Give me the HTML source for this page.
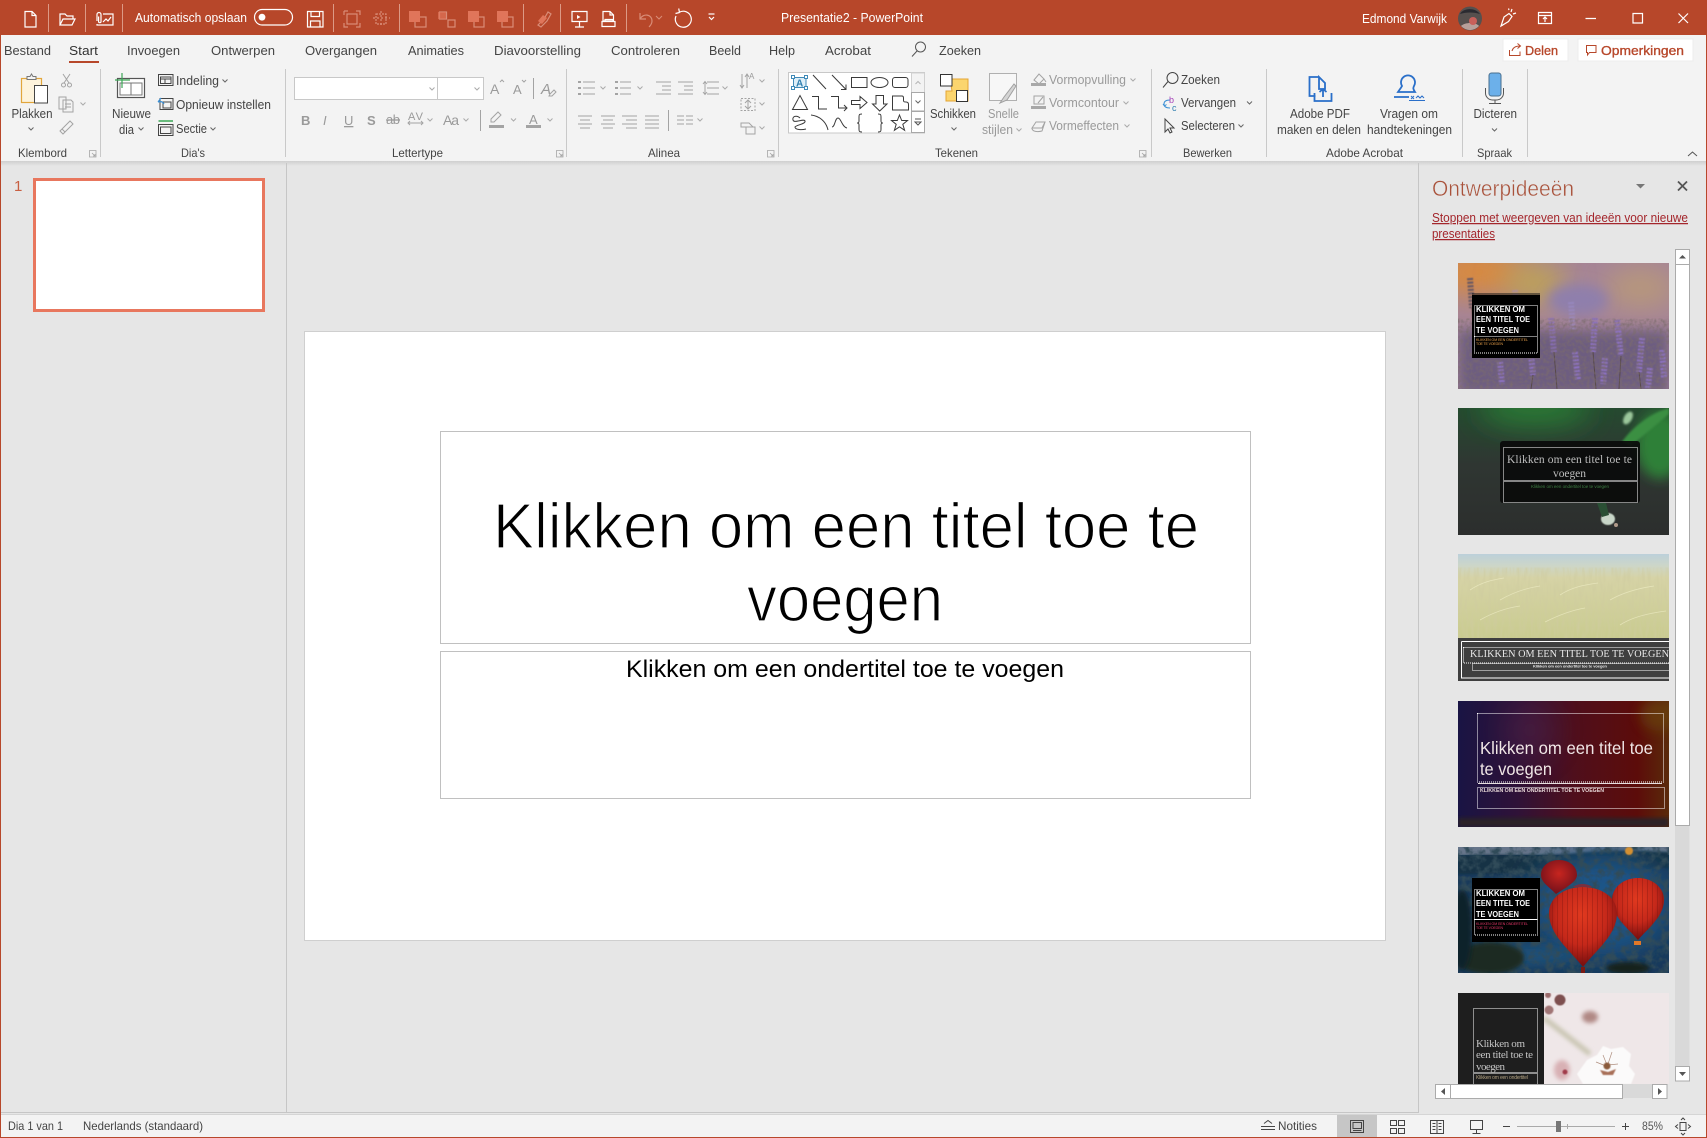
<!DOCTYPE html>
<html lang="nl"><head><meta charset="utf-8"><title>Presentatie2 - PowerPoint</title>
<style>
html,body{margin:0;padding:0;background:#e6e6e6;overflow:hidden}
svg{display:block}
text{font-family:"Liberation Sans",sans-serif;font-size:12.5px;fill:#444}
.w text,text.w{fill:#fff}
.d text,text.d{fill:#9a9a9a}
.ic{fill:none;stroke:#555;stroke-width:1}
.wi{fill:none;stroke:#fff;stroke-width:1.2}
.di{fill:none;stroke:#d98d78;stroke-width:1.2}
.gi{fill:none;stroke:#a3a3a3;stroke-width:1}
.si{fill:none;stroke:#444;stroke-width:1}
.sep{stroke:#c9c9c9;stroke-width:1}
.dot{fill:none;stroke:#fff;stroke-width:1;stroke-dasharray:1 1}
</style></head><body>
<svg xmlns="http://www.w3.org/2000/svg" width="1707" height="1138" viewBox="0 0 1707 1138">
<defs>
<path id="c" d="M-2.5-1.500L0 1L2.500-1.500" fill="none" stroke="#666" stroke-width="1"/>
<path id="cd" d="M-2.500-1.500L0 1L2.500-1.500" fill="none" stroke="#aaa" stroke-width="1"/>
<path id="lc" d="M.5.5h6.500v6.500h-6.500zM3 3l3 3M6 4v2h-2" fill="none" stroke="#a5a5a5" stroke-width=".8"/>
<filter id="b05" x="-30%" y="-30%" width="160%" height="160%"><feGaussianBlur stdDeviation=".5"/></filter>
<filter id="b2" x="-30%" y="-30%" width="160%" height="160%"><feGaussianBlur stdDeviation="2"/></filter>
<filter id="b1" x="-30%" y="-30%" width="160%" height="160%"><feGaussianBlur stdDeviation="1"/></filter>
<filter id="b6" x="-50%" y="-50%" width="200%" height="200%"><feGaussianBlur stdDeviation="6"/></filter>
<filter id="b14" x="-80%" y="-80%" width="260%" height="260%"><feGaussianBlur stdDeviation="14"/></filter>
<filter id="n"><feTurbulence type="fractalNoise" baseFrequency=".3" numOctaves="2" seed="4"/><feColorMatrix values="0 0 0 0 .2 0 0 0 0 .15 0 0 0 0 .15 0 0 0 1.6 -.6"/></filter>
<filter id="ng"><feTurbulence type="fractalNoise" baseFrequency=".35 .06" numOctaves="2" seed="7"/><feColorMatrix values="0 0 0 0 .62 0 0 0 0 .6 0 0 0 0 .35 0 0 0 1.4 -.55"/></filter>
<filter id="nk"><feTurbulence type="fractalNoise" baseFrequency=".13" numOctaves="3" seed="3"/><feColorMatrix values="0 0 0 0 .03 0 0 0 0 .07 0 0 0 0 .1 0 0 0 3 -1.2"/></filter>
<clipPath id="c1"><rect x="1458" y="263" width="211" height="126"/></clipPath>
<clipPath id="c2"><rect x="1458" y="408" width="211" height="127"/></clipPath>
<clipPath id="c3"><rect x="1458" y="554" width="211" height="127"/></clipPath>
<clipPath id="c4"><rect x="1458" y="701" width="211" height="126"/></clipPath>
<clipPath id="c5"><rect x="1458" y="847" width="211" height="126"/></clipPath>
<clipPath id="c6"><rect x="1458" y="993" width="211" height="91"/></clipPath>
<linearGradient id="sh" x1="0" y1="0" x2="0" y2="1"><stop offset="0" stop-color="#cfcfcf"/><stop offset="1" stop-color="#e6e6e6"/></linearGradient>
<linearGradient id="g2" x1="0" y1="0" x2="0" y2="1"><stop offset="0" stop-color="#254a30"/><stop offset=".45" stop-color="#2f3632"/><stop offset="1" stop-color="#2c2e2d"/></linearGradient>
<linearGradient id="g3" x1="0" y1="0" x2="0" y2="1"><stop offset="0" stop-color="#bcd0da"/><stop offset=".14" stop-color="#cdd6c8"/><stop offset=".28" stop-color="#d6d3a6"/><stop offset="1" stop-color="#c9cb8f"/></linearGradient>
<linearGradient id="g4" x1="0" y1="0" x2="1" y2="0"><stop offset="0" stop-color="#191444"/><stop offset=".28" stop-color="#2f1238"/><stop offset=".55" stop-color="#4f0f1c"/><stop offset=".85" stop-color="#5c0c0a"/><stop offset="1" stop-color="#5a2a0a"/></linearGradient>
<radialGradient id="bal" cx=".48" cy=".35" r=".62"><stop offset="0" stop-color="#e0391f"/><stop offset=".6" stop-color="#c5281a"/><stop offset="1" stop-color="#7c1010"/></radialGradient>
<radialGradient id="bal2" cx=".5" cy=".4" r=".62"><stop offset="0" stop-color="#c7251f"/><stop offset="1" stop-color="#70101a"/></radialGradient>
<pattern id="st" width="5" height="10" patternUnits="userSpaceOnUse"><path d="M2.500 0v10" stroke="#7a120c" stroke-width=".7" opacity=".5"/></pattern>
</defs>

<!-- base -->
<rect width="1707" height="1138" fill="#e6e6e6"/>
<rect width="1707" height="35" fill="#b7472a"/>
<rect y="35" width="1707" height="126" fill="#f3f3f3"/>
<rect y="161" width="1707" height="5" fill="url(#sh)"/>

<!-- title bar icons -->
<g class="wi">
<path d="M25 11.500h7l4 4v11.500H25zM32 11.500v4h4"/>
<path d="M60 25V14h5l2 2h6v3M60 25l3-6h12l-3 6z"/>
<path d="M97 21v-6.500a2 2 0 0 1 4 0v7a1.200 1.200 0 0 1-2.400 0v-5M103 14h10v11H97v-1M103 22l3-3 2 2 3-4"/>
<rect x="254.500" y="9.500" width="38" height="15.500" rx="7.700"/>
<path d="M307.500 11.500h15.500v15.500h-15.500zM311 11.500v5h8.500v-5M310.500 27v-6h9.500v6"/>
<path d="M572 11.500h15v10h-15zM579.500 21.500v5M575 27h9"/>
<path d="M577 15v4l3.500-2z" fill="#fff" stroke="none"/>
<path d="M603 11.500h7l3.500 3.500v6h-10.500zM610 11.500v3.500h3.500M602 21.500h13v5h-13zM605 21.500v-2h8v2"/>
<path d="M676 16a8 8 0 1 0 3-3.500M679.500 12.500l-.8-4M679.500 12.500l-4 1"/>
<path d="M708.500 14h6"/>
<path d="M709 17l2.500 2.500l2.500-2.500"/>
<path d="M1501 26l3-9 5-3.500 3 3-3.500 5zM1511 12l1-3M1513 14l3-1M1509 10l-.5-1.500M1501 26l2-1"/>
<path d="M1538.500 12.500h13v11h-13zM1538.500 15.500h13M1545 22v-5M1543 19l2-2 2 2"/>
<path d="M1585.500 18.500h10.500M1633 13.500h9.500v9.500h-9.500zM1678.500 13.500l9.500 9.500M1688 13.500l-9.500 9.500"/>
</g>
<circle cx="262" cy="17.200" r="3.400" fill="#fff"/>
<g stroke="#dc9a86" stroke-width="1"><path d="M48.500 4v28M85.500 4v28M122.500 4v28M333.500 4v28M399.500 4v28M523.500 4v28M560.500 4v28M626.500 4v28"/></g>
<g class="di">
<rect x="347" y="14" width="10" height="10"/><path d="M344 11h4M344 11v4M356 11h4v4M344 23v4h4M360 23v4h-4"/>
<rect x="376" y="14" width="10" height="10" stroke-dasharray="2 1"/><path d="M373 18h17M381 11v16" stroke-dasharray="2 2"/>
<rect x="415" y="17" width="11" height="10"/><rect x="439.500" y="12" width="7" height="7"/><rect x="448" y="20" width="7" height="7"/>
<rect x="474" y="17" width="10" height="10"/><rect x="502" y="17" width="11" height="10"/>
<path d="M538 25l6-6 4-7 3 2-4 7-6 6z"/>
<path d="M640 13v6h6M640 19c3-6 12-5 12 2 0 2-1 4-3 6"/>
<path d="M656 16l3 3 3-3" stroke-width="1"/>
</g>
<g fill="#e0755a"><rect x="409" y="11" width="11" height="11"/><rect x="468" y="11" width="11" height="11"/><rect x="497" y="11" width="11" height="11"/><rect x="438" y="12" width="8" height="7" opacity=".7"/><path d="M538 21l5-6 4 3-5 6z"/></g>
<g class="w"><text x="135" y="22" textLength="112" lengthAdjust="spacingAndGlyphs">Automatisch opslaan</text>
<text x="781" y="22" textLength="142" lengthAdjust="spacingAndGlyphs">Presentatie2  -  PowerPoint</text>
<text x="1362" y="23" textLength="85" lengthAdjust="spacingAndGlyphs">Edmond Varwijk</text></g>
<circle cx="1470" cy="18.500" r="12" fill="#56504e"/><path d="M1461 26a12 12 0 0 0 18 0c-3-4-14-4-18 0z" fill="#b8a09a"/><circle cx="1473" cy="21" r="4" fill="#c8605a"/><path d="M1460 14c3-6 15-7 20 0-6-2-14-2-20 0z" fill="#2a2a30"/>

<!-- tabs -->
<text x="4" y="55" textLength="47" lengthAdjust="spacingAndGlyphs">Bestand</text>
<text x="69" y="55" textLength="29" lengthAdjust="spacingAndGlyphs" style="fill:#333">Start</text>
<rect x="69" y="61" width="30" height="2" fill="#b7472a"/>
<text x="127" y="55" textLength="53" lengthAdjust="spacingAndGlyphs">Invoegen</text>
<text x="211" y="55" textLength="64" lengthAdjust="spacingAndGlyphs">Ontwerpen</text>
<text x="305" y="55" textLength="72" lengthAdjust="spacingAndGlyphs">Overgangen</text>
<text x="408" y="55" textLength="56" lengthAdjust="spacingAndGlyphs">Animaties</text>
<text x="494" y="55" textLength="87" lengthAdjust="spacingAndGlyphs">Diavoorstelling</text>
<text x="611" y="55" textLength="69" lengthAdjust="spacingAndGlyphs">Controleren</text>
<text x="709" y="55" textLength="32" lengthAdjust="spacingAndGlyphs">Beeld</text>
<text x="769" y="55" textLength="26" lengthAdjust="spacingAndGlyphs">Help</text>
<text x="825" y="55" textLength="46" lengthAdjust="spacingAndGlyphs">Acrobat</text>
<path d="M912 56.500l5-5.500" fill="none" stroke="#555"/><circle cx="920.500" cy="47" r="5" fill="none" stroke="#555"/>
<text x="939" y="55" textLength="42" lengthAdjust="spacingAndGlyphs">Zoeken</text>

<!-- delen / opmerkingen -->
<rect x="1503" y="39" width="65" height="22" fill="#fff" stroke="#ececec"/>
<rect x="1578" y="39" width="115" height="22" fill="#fff" stroke="#ececec"/>
<path d="M1509.500 50v5.500h10.500v-4M1512 51c1-4 4-5 8-5M1517.500 43.500l3 2.500-3 2.500" fill="none" stroke="#b7472a"/>
<path d="M1586.500 45.500h9.500v7h-6.500l-2 2.500v-2.500h-1z" fill="none" stroke="#b7472a"/>
<text x="1525" y="55" textLength="33" lengthAdjust="spacingAndGlyphs" style="fill:#b7472a;stroke:#b7472a;stroke-width:.35;font-size:13px">Delen</text>
<text x="1601" y="55" textLength="83" lengthAdjust="spacingAndGlyphs" style="fill:#b7472a;stroke:#b7472a;stroke-width:.35;font-size:13px">Opmerkingen</text>

<!-- ribbon separators -->
<g class="sep"><path d="M100.500 69v88M285.500 69v88M566.500 69v88M778.500 69v88M1151.500 69v88M1266.500 69v88M1462.500 69v88M1527.500 69v88"/></g>

<!-- group labels -->
<g style="font-size:12px"><text style="font-size:12px" x="18" y="157" textLength="49" lengthAdjust="spacingAndGlyphs">Klembord</text>
<text style="font-size:12px" x="181" y="157" textLength="24" lengthAdjust="spacingAndGlyphs">Dia's</text>
<text style="font-size:12px" x="392" y="157" textLength="51" lengthAdjust="spacingAndGlyphs">Lettertype</text>
<text style="font-size:12px" x="648" y="157" textLength="32" lengthAdjust="spacingAndGlyphs">Alinea</text>
<text style="font-size:12px" x="935" y="157" textLength="43" lengthAdjust="spacingAndGlyphs">Tekenen</text>
<text style="font-size:12px" x="1183" y="157" textLength="49" lengthAdjust="spacingAndGlyphs">Bewerken</text>
<text style="font-size:12px" x="1326" y="157" textLength="77" lengthAdjust="spacingAndGlyphs">Adobe Acrobat</text>
<text style="font-size:12px" x="1477" y="157" textLength="35" lengthAdjust="spacingAndGlyphs">Spraak</text></g>
<use href="#lc" x="89" y="150"/><use href="#lc" x="556" y="150"/><use href="#lc" x="767" y="150"/><use href="#lc" x="1139" y="150"/>
<path d="M1688 156l4.500-4 4.500 4" fill="none" stroke="#555"/>

<!-- klembord -->
<rect x="21.500" y="78.500" width="20" height="24" fill="#fdf3dc" stroke="#e2a63c" stroke-width="1.200"/>
<path d="M27 78.500v-2h3l1.500-2.500 1.500 2.500h3v3h-9z" fill="#f3f3f3" stroke="#777"/>
<rect x="34.500" y="85.500" width="13" height="17.500" fill="#fff" stroke="#444"/>
<text x="11.500" y="118" textLength="41" lengthAdjust="spacingAndGlyphs">Plakken</text>
<use href="#c" x="31" y="129"/>
<g class="gi"><path d="M63 74l6 9M70 74l-6 9"/><circle cx="63.500" cy="85" r="2"/><circle cx="69.500" cy="85" r="2"/>
<path d="M59 97h7v12h-7zM63 100h8l2 2v10h-10z"/><path d="M65 104h6M65 107h6"/><path d="M60 131l4-4 6-6 3 3-6 6-4 4z"/><path d="M62 129l3 3"/></g>
<use href="#cd" x="83" y="104"/>

<!-- dia's -->
<rect x="117.500" y="78.500" width="27" height="19" fill="#fff" stroke="#555" stroke-width="1.200"/>
<path d="M120 83h22v12h-22zM131 83v12" fill="none" stroke="#777"/>
<path d="M122 73v15M115 80h15" stroke="#3aa655" stroke-width="1.200" fill="none"/>
<text x="112" y="118" textLength="39" lengthAdjust="spacingAndGlyphs">Nieuwe</text><text x="119" y="134" textLength="15" lengthAdjust="spacingAndGlyphs">dia</text><use href="#c" x="141" y="129"/>
<path class="si" d="M158.500 74.500h14.500v11h-14.500zM160.500 77h10.500v6.500h-10.500zM160.500 79h10.500M165 79v4.500"/>
<text x="176" y="85" textLength="43" lengthAdjust="spacingAndGlyphs">Indeling</text><use href="#c" x="225" y="81"/>
<path class="si" d="M160 98.500h13v11h-13zM163 102h8v6h-8z"/><path d="M158 102l3-4M158 102c3-1 5 0 6 2" fill="none" stroke="#3b8fd4" stroke-width="1.200"/>
<text x="176" y="109" textLength="95" lengthAdjust="spacingAndGlyphs">Opnieuw instellen</text>
<path d="M158.500 121h14.500" stroke="#3aa655" stroke-width="1.500"/><path class="si" d="M158.500 124.500h14.500v11h-14.500zM160.500 127h10.500v6.500h-10.500z"/>
<text x="176" y="133" textLength="31" lengthAdjust="spacingAndGlyphs">Sectie</text><use href="#c" x="213" y="129"/>

<!-- lettertype -->
<rect x="294.500" y="77.500" width="143" height="22" fill="#fff" stroke="#c8c8c8"/>
<rect x="437.500" y="77.500" width="46" height="22" fill="#fff" stroke="#c8c8c8"/>
<use href="#cd" x="432" y="89"/><use href="#cd" x="477" y="89"/>
<g class="d" style="font-size:13px"><text x="490" y="94" style="font-size:14px" textLength="9">A</text><text x="513" y="94" style="font-size:13px" textLength="9">A</text>
<text x="301" y="125" textLength="8" style="font-weight:bold;font-size:13px">B</text>
<text x="323" y="125" textLength="6" style="font-style:italic;font-size:13px">I</text>
<text x="344" y="125" textLength="8" style="text-decoration:underline;font-size:13px">U</text>
<text x="367" y="125" textLength="8" style="font-weight:bold;font-size:13px">S</text>
<text x="386" y="124" textLength="14" style="text-decoration:line-through;font-size:13px">ab</text>
<text x="408" y="120" textLength="15" style="font-size:11px">AV</text>
<text x="443" y="125" textLength="16" style="font-size:14px">Aa</text>
<text x="541" y="94" style="font-style:italic;font-size:15px" textLength="11">A</text>
<text x="529" y="124" style="font-size:13px" textLength="9">A</text></g>
<g class="gi"><path d="M500 82l2-2 2 2M522 80l2 2 2-2M408 123h15M410 121l-2 2 2 2M421 121l2 2-2 2M550 94l4-4 2 2-4 4h-3zM533.500 78v21M480.500 110v21"/>
<path d="M491 119l7-7 3 3-7 7h-3z"/></g>
<rect x="489" y="125" width="15" height="3" fill="#a3a3a3"/><rect x="526" y="125" width="15" height="3" fill="#a3a3a3"/>
<use href="#cd" x="430" y="120"/><use href="#cd" x="466" y="120"/><use href="#cd" x="513.500" y="120"/><use href="#cd" x="550" y="120"/>

<!-- alinea -->
<g class="gi">
<path d="M583 82h12M583 88h12M583 94h12M620 82h11M620 88h11M620 94h11M656 82h15M662 86h9M662 90h9M656 94h15M678 82h15M684 86h9M684 90h9M678 94h15M707 82h12M707 88h12M707 94h12M703 84l2-2.500 2 2.500M703 92l2 2.500 2-2.500M705 82v12"/>
<path d="M578 116h14M580 120h10M578 124h14M580 128h10M601 116h14M603 120h10M601 124h14M603 128h10M622 116h15M626 120h11M622 124h15M626 128h11M645 116h14M645 120h14M645 124h14M645 128h14M668.500 110v21M677 116h7M686 116h7M677 120h7M686 120h7M677 124h7M686 124h7"/>
<path d="M742 74v14M740 85l2 3 2-3M747 74v14M745 77l2-3 2 3"/><path d="M741 98.500h14v12h-14z" stroke-dasharray="2 1.500"/><path d="M748 100v9M745 103l3-3 3 3M745 106l3 3 3-3"/>
<path d="M741 123h8l4 4h-12zM746 127h9v7h-9z"/>
</g>
<g fill="#a3a3a3"><rect x="578" y="81" width="3" height="2"/><rect x="578" y="87" width="3" height="2"/><rect x="578" y="93" width="3" height="2"/><rect x="615" y="81" width="3" height="2"/><rect x="615" y="87" width="3" height="2"/><rect x="615" y="93" width="3" height="2"/></g>
<text x="749" y="79" class="d" style="font-size:8px">A</text>
<use href="#cd" x="603" y="88"/><use href="#cd" x="640" y="88"/><use href="#cd" x="725" y="88"/><use href="#cd" x="700" y="120"/><use href="#cd" x="762" y="81"/><use href="#cd" x="762" y="104"/><use href="#cd" x="762" y="128"/>

<!-- shapes gallery -->
<rect x="788.500" y="72.500" width="136" height="60.500" fill="#fff" stroke="#c8c8c8"/>
<rect x="911.500" y="73" width="13" height="19.500" fill="#f3f3f3" stroke="#d0d0d0"/>
<rect x="911.500" y="92.500" width="13" height="18.500" fill="#fff" stroke="#a8a8a8"/>
<rect x="911.500" y="111.500" width="13" height="21" fill="#fff" stroke="#a8a8a8"/>
<path d="M915.500 84l2.500-2.500 2.500 2.500" fill="none" stroke="#b5b5b5"/><use href="#c" x="918" y="102"/><path d="M915 119h6M915 122h6l-3 3z" fill="#fff" stroke="#555"/>
<g fill="none" stroke="#3a3a3a">
<path d="M793.500 77.500h12.500v10h-12.500z" stroke="#3f8ab8" fill="#dceef8"/>
<path d="M813 75l13 14M832 75l14 14.500M846 84.500v5h-5M851.500 77.500h15.500v10h-15.500zM888 82.500a8.500 5 0 1 1-17 0 8.500 5 0 0 1 17 0zM895 77.500h10.500a2.500 2.500 0 0 1 2.500 2.500v5a2.500 2.500 0 0 1-2.500 2.500h-10.500a2.500 2.500 0 0 1-2.500-2.500v-5a2.500 2.500 0 0 1 2.500-2.500z"/>
<path d="M792.500 109.500l7.500-14 7.500 14zM812 96.500h6.500v12.500h8.500M831 96.500h7.500v11.500h8M844 105l3 3-3 3M851.500 100.500h8.500v-4l7 6-7 6v-4h-8.500zM876 95.500h7.500v8.500h3.500l-7.300 7-7.200-7h3.500zM892.500 96h9.500c1 0 1.500 1 1.500 2v2.500c0 1.500 1 1.500 2.500 1.500 1.500 0 2.500 1 2.500 2.500v5.500h-16z"/>
<path d="M800 118c-3-3-8-2-7 2 1 4 11-2 12 1 1 3-9 4-10 6 0 3 7 3 11 2M811 115c8 1 15 6 17 15M832 127c3 0 3-9 6-9s4 9 9 10M862 114c-3 0-3 1-3 3v4c0 2-1 2-2 2 1 0 2 0 2 2v4c0 2 0 3 3 3M878 114c3 0 3 1 3 3v4c0 2 1 2 2 2-1 0-2 0-2 2v4c0 2 0 3-3 3M899.500 115l2.200 5.500h5.800l-4.700 3.800 1.800 6-5.100-3.500-5.100 3.500 1.800-6-4.700-3.800h5.800z"/>
</g>
<g fill="#fff" stroke="#3f8ab8"><rect x="791.500" y="75.500" width="3" height="3"/><rect x="804.500" y="75.500" width="3" height="3"/><rect x="791.500" y="86.500" width="3" height="3"/><rect x="804.500" y="86.500" width="3" height="3"/></g>
<text x="796" y="86.500" style="font-size:10px;font-weight:bold;fill:#2f7fb0">A</text>

<!-- tekenen -->
<path d="M950 79h18v22h-22V91h6z" fill="#fbd56e" stroke="#e4a534"/>
<rect x="940.500" y="74.500" width="11.500" height="11.500" fill="#fff" stroke="#333"/>
<rect x="956.500" y="90.500" width="11" height="11" fill="#fff" stroke="#333"/>
<text x="930" y="118" textLength="46" lengthAdjust="spacingAndGlyphs">Schikken</text><use href="#c" x="954" y="129"/>
<path d="M989.500 73.500h27v27h-27z" fill="#f7f7f7" stroke="#b0b0b0"/><path d="M1000 103l4-6 10-13 2 2-9 14z" fill="#d5d5d5" stroke="#a0a0a0"/>
<g class="d"><text x="988" y="118" textLength="31" lengthAdjust="spacingAndGlyphs">Snelle</text><text x="982" y="134" textLength="31" lengthAdjust="spacingAndGlyphs">stijlen</text>
<text x="1049" y="84" textLength="77" lengthAdjust="spacingAndGlyphs">Vormopvulling</text><text x="1049" y="107" textLength="70" lengthAdjust="spacingAndGlyphs">Vormcontour</text><text x="1049" y="130" textLength="70" lengthAdjust="spacingAndGlyphs">Vormeffecten</text></g>
<use href="#cd" x="1019" y="130"/><use href="#cd" x="1133" y="80"/><use href="#cd" x="1126" y="103"/><use href="#cd" x="1127" y="126"/>
<g class="gi"><path d="M1034 80l5-6 5 5-5 5zM1044 79l2 3"/><path d="M1034 96h10v8h-10zM1038 103l5-6"/><path d="M1032 128l4-6h9l-3 6z"/><path d="M1032 128c0 4 6 4 10 3l3-9"/></g>
<rect x="1031" y="83" width="15" height="3" fill="#a8a8a8"/><rect x="1031" y="106" width="15" height="3" fill="#a8a8a8"/>

<!-- bewerken -->
<path d="M1163 87.500l5-6" fill="none" stroke="#444"/><circle cx="1172.500" cy="78" r="5.500" fill="none" stroke="#444"/>
<text x="1181" y="84" textLength="39" lengthAdjust="spacingAndGlyphs">Zoeken</text>
<path d="M1170 100c-3 0-6 1-6 4s3 4 6 4M1163 104l1.500 2 2-1.500" fill="none" stroke="#3b8fd4"/>
<text x="1169" y="103" style="font-size:9px;fill:#a644b8">b</text><text x="1172" y="111" style="font-size:9px;fill:#2f7fb0">c</text>
<text x="1181" y="107" textLength="55" lengthAdjust="spacingAndGlyphs">Vervangen</text><use href="#c" x="1249.500" y="103"/>
<path class="si" d="M1165 119v13l3-3 2 4 2-1-2-4h4z"/>
<text x="1181" y="130" textLength="54" lengthAdjust="spacingAndGlyphs">Selecteren</text><use href="#c" x="1241" y="126"/>

<!-- adobe -->
<g fill="none" stroke="#2a6fc9" stroke-width="1.800"><path d="M1319 77h-9.500v19h6M1319 77l6 6v6h-6zM1314.500 93v8h17v-8M1323 97v-8M1319.500 92l3.500-3 3.500 3"/>
<path d="M1402 86a7 7 0 1 1 12 0c-1 2-1 3 1 6h-17c2-3 3-4 4-6zM1394 97h15"/><path d="M1411 96l3 3M1414 96l-3 3" stroke-width="1"/><path d="M1416 98l2-2 2 2 2-2 2 2" stroke-width="1"/><path d="M1409 100.500h16" stroke-width="1"/></g>
<g><text x="1290" y="118" textLength="60" lengthAdjust="spacingAndGlyphs">Adobe PDF</text><text x="1277" y="134" textLength="84" lengthAdjust="spacingAndGlyphs">maken en delen</text>
<text x="1380" y="118" textLength="58" lengthAdjust="spacingAndGlyphs">Vragen om</text><text x="1367" y="134" textLength="85" lengthAdjust="spacingAndGlyphs">handtekeningen</text></g>
<rect x="1489" y="73" width="12" height="23" rx="2.500" fill="#6cb0ea" stroke="#4a6f8e"/>
<path d="M1485.500 88v5a7 7 0 0 0 7 7h4a7 7 0 0 0 7-7v-5M1495 100v3M1489 103.500h12" fill="none" stroke="#555"/>
<text x="1473.500" y="118" textLength="43.500" lengthAdjust="spacingAndGlyphs">Dicteren</text><use href="#c" x="1494.500" y="130"/>

<!-- panes -->
<path d="M286.500 163v949.500H0" fill="none" stroke="#c6c6c6"/>
<path d="M286.500 1112.500H1418.500V163" fill="none" stroke="#c6c6c6"/>
<text x="14" y="191" style="font-size:15px;fill:#c85f42" textLength="7">1</text>
<rect x="34.500" y="179.500" width="229" height="131" fill="#fff" stroke="#e8775e" stroke-width="3"/>

<!-- slide -->
<rect x="304.500" y="331.500" width="1081" height="609" fill="#fff" stroke="#cfcfcf"/>
<rect x="440.500" y="431.500" width="810" height="212" fill="none" stroke="#808080" stroke-dasharray="1 1"/>
<rect x="440.500" y="651.500" width="810" height="147" fill="none" stroke="#808080" stroke-dasharray="1 1"/>
<text x="493" y="548" textLength="706" lengthAdjust="spacingAndGlyphs" style="font-size:64px;fill:#000;stroke:#fff;stroke-width:1.300px">Klikken om een titel toe te</text>
<text x="747" y="621" textLength="196" lengthAdjust="spacingAndGlyphs" style="font-size:64px;fill:#000;stroke:#fff;stroke-width:1.300px">voegen</text>
<text x="626" y="677" textLength="438" lengthAdjust="spacingAndGlyphs" style="font-size:24px;fill:#000">Klikken om een ondertitel toe te voegen</text>

<!-- right panel header -->
<text x="1432" y="196" textLength="142" lengthAdjust="spacingAndGlyphs" style="font-size:22px;fill:#a9523b;stroke:#e6e6e6;stroke-width:.45px">Ontwerpideeën</text>
<path d="M1636 184h9l-4.500 4.500z" fill="#777"/>
<path d="M1678 181.500l9 9M1687 181.500l-9 9" stroke="#555" stroke-width="1.800" fill="none"/>
<text x="1432" y="222" textLength="256" lengthAdjust="spacingAndGlyphs" style="fill:#a4262c;text-decoration:underline">Stoppen met weergeven van ideeën voor nieuwe</text>
<text x="1432" y="238" textLength="63" lengthAdjust="spacingAndGlyphs" style="fill:#a4262c;text-decoration:underline">presentaties</text>

<!-- scrollbars -->
<rect x="1675" y="249" width="14.500" height="832" fill="#d9d9d9"/>
<rect x="1675.500" y="264.500" width="14" height="561" fill="#fff" stroke="#ababab"/>
<rect x="1675.500" y="249.500" width="14" height="15" fill="#fff" stroke="#ababab"/>
<path d="M1679 258.500h7l-3.500-3.500z" fill="#555"/>
<rect x="1675.500" y="1066.500" width="14" height="14.500" fill="#fff" stroke="#ababab"/>
<path d="M1679 1072h7l-3.500 4z" fill="#555"/>

<!-- T1 lavender -->
<g clip-path="url(#c1)">
<rect x="1458" y="263" width="211" height="126" fill="#a58497"/>
<ellipse cx="1478" cy="272" rx="50" ry="24" fill="#d98a3e" filter="url(#b14)"/>
<ellipse cx="1535" cy="283" rx="32" ry="20" fill="#bea257" filter="url(#b14)"/>
<ellipse cx="1640" cy="288" rx="36" ry="20" fill="#b8987a" filter="url(#b14)"/>
<ellipse cx="1578" cy="300" rx="30" ry="16" fill="#8f7fac" filter="url(#b6)"/>
<rect x="1458" y="330" width="211" height="65" fill="#6d5d80" filter="url(#b6)"/>
<g fill="none" stroke="#8d72c2" stroke-width="6" stroke-dasharray="2.200 1.400" filter="url(#b05)">
<path d="M1551 318l3 34" opacity=".8"/><path d="M1571 302l2 28" stroke="#9a8cc8" opacity=".55"/><path d="M1595 318l-2 34"/><path d="M1617 320l4 36"/><path d="M1642 338l-3 34"/><path d="M1662 350l2 28"/><path d="M1530 345l3 30"/><path d="M1575 352l3 28"/><path d="M1605 358l-2 26"/><path d="M1500 362l2 22"/><path d="M1650 368l-2 20"/>
<path d="M1470 278l2 30" stroke="#6d5a62"/><path d="M1515 290l1 12" stroke="#a98cb0" opacity=".6"/>
</g>
<g stroke="#4d4030" stroke-width="1" opacity=".7" fill="none"><path d="M1554 352l3 37M1593 352l3 37M1621 356l-2 33M1639 372l2 17M1533 375l-2 14M1472 308l1 24"/></g>
<rect x="1458" y="325" width="211" height="64" filter="url(#n)"/>
<rect x="1472" y="295" width="68" height="63" fill="#000"/>
<path d="M1472 294h68" stroke="#111"/>
<rect x="1474.500" y="305.500" width="63" height="31" class="dot"/><rect x="1474.500" y="336.500" width="63" height="16.500" class="dot"/>
<g class="w"><text x="1476" y="312" textLength="49" lengthAdjust="spacingAndGlyphs" style="font-weight:bold;font-size:8.500px">KLIKKEN OM</text><text x="1476" y="322" textLength="54" lengthAdjust="spacingAndGlyphs" style="font-weight:bold;font-size:8.500px">EEN TITEL TOE</text><text x="1476" y="333" textLength="43" lengthAdjust="spacingAndGlyphs" style="font-weight:bold;font-size:8.500px">TE VOEGEN</text></g>
<text x="1476" y="341" textLength="52" style="font-size:3.500px;fill:#e8a04a">KLIKKEN OM EEN ONDERTITEL</text><text x="1476" y="345" textLength="27" style="font-size:3.500px;fill:#e8a04a">TOE TE VOEGEN</text>
</g>

<!-- T2 green -->
<g clip-path="url(#c2)">
<rect x="1458" y="408" width="211" height="127" fill="url(#g2)"/>
<ellipse cx="1535" cy="408" rx="55" ry="18" fill="#2c7a34" filter="url(#b14)"/>
<ellipse cx="1660" cy="445" rx="24" ry="34" fill="#2f8038" filter="url(#b6)"/>
<path d="M1622 442c8-12 26-28 47-34v6c-12 10-26 22-38 32z" fill="#3a8f42" filter="url(#b1)"/>
<ellipse cx="1628" cy="418" rx="4" ry="7" fill="#9cc89c" transform="rotate(30 1628 418)" filter="url(#b1)"/>
<ellipse cx="1608" cy="519" rx="7" ry="6" fill="#c8d6c8" filter="url(#b05)"/><circle cx="1616" cy="525" r="2" fill="#b09a8a"/>
<path d="M1597 503l5 14 7-2-3-12z" fill="#2a4f34"/>
<rect x="1500" y="441" width="140" height="62" rx="3" fill="#0a0a0a" opacity=".92"/>
<rect x="1503.500" y="447.500" width="134" height="33" class="dot"/><rect x="1503.500" y="481.500" width="134" height="21" class="dot"/>
<text x="1507" y="463" textLength="125" style="font-family:'Liberation Serif',serif;font-size:11.500px;fill:#bdbdbd">Klikken om een titel toe te</text>
<text x="1553" y="477" textLength="33" style="font-family:'Liberation Serif',serif;font-size:11.500px;fill:#bdbdbd">voegen</text>
<text x="1531" y="488" textLength="78" style="font-size:4.500px;fill:#3d7f42">Klikken om een ondertitel toe te voegen</text>
</g>

<!-- T3 grass -->
<g clip-path="url(#c3)">
<rect x="1458" y="554" width="211" height="85" fill="url(#g3)"/>
<rect x="1458" y="574" width="211" height="65" filter="url(#ng)"/>
<g fill="none" stroke="#eeecc4" stroke-width=".8" opacity=".7"><path d="M1470 590c12-8 22-10 34-12M1500 600c14-8 26-12 40-14M1560 595c12-8 24-10 38-12M1610 600c14-8 30-12 44-14M1480 620c14-8 26-12 40-14M1545 622c16-8 28-12 40-14M1620 625c12-8 30-12 46-14"/></g>
<rect x="1458" y="638" width="211" height="43" fill="#3f3f3f"/>
<path d="M1461.500 641.500H1670M1461.500 641.500v36.500H1670" fill="none" stroke="#fff"/>
<rect x="1463.500" y="647.500" width="210" height="15.500" class="dot"/><rect x="1472.500" y="663.500" width="200" height="7" class="dot"/>
<text x="1470" y="657" textLength="199" lengthAdjust="spacingAndGlyphs" style="font-family:'Liberation Serif',serif;font-size:10px;fill:#e8e8e8">KLIKKEN OM EEN TITEL TOE TE VOEGEN</text>
<text x="1533" y="667.500" textLength="74" style="font-size:4px;fill:#e8e8e8;font-weight:bold">Klikken om een ondertitel toe te voegen</text>
</g>

<!-- T4 dark -->
<g clip-path="url(#c4)">
<rect x="1458" y="701" width="211" height="126" fill="url(#g4)"/>
<ellipse cx="1530" cy="730" rx="26" ry="30" fill="#54284e" opacity=".45" filter="url(#b14)"/>
<ellipse cx="1660" cy="715" rx="20" ry="16" fill="#6a4210" opacity=".7" filter="url(#b6)"/>
<rect x="1458" y="818" width="211" height="9" fill="#2a2028" filter="url(#b2)"/>
<rect x="1477.500" y="713.500" width="186" height="68.500" class="dot"/>
<rect x="1477.500" y="787.500" width="187" height="21" class="dot"/>
<path d="M1478 783.500h184" stroke="#e8e0e0"/>
<text x="1480" y="754" textLength="173" lengthAdjust="spacingAndGlyphs" style="font-size:17.500px;fill:#f0e6e6">Klikken om een titel toe</text>
<text x="1480" y="775" textLength="72" lengthAdjust="spacingAndGlyphs" style="font-size:17.500px;fill:#f0e6e6">te voegen</text>
<text x="1480" y="792" textLength="124" lengthAdjust="spacingAndGlyphs" style="font-size:5px;fill:#e8d8d8;font-weight:bold">KLIKKEN OM EEN ONDERTITEL TOE TE VOEGEN</text>
</g>

<!-- T5 balloons -->
<g clip-path="url(#c5)">
<rect x="1458" y="847" width="211" height="126" fill="#18395a"/>
<rect x="1458" y="847" width="211" height="8" fill="#66758a"/>
<path d="M1458 856c40-3 80 1 120-3s60-2 91-1v16c-60 3-140 6-211 6z" fill="#123044" filter="url(#b1)"/>
<ellipse cx="1600" cy="905" rx="70" ry="50" fill="#1c5488" filter="url(#b14)"/>
<ellipse cx="1520" cy="955" rx="60" ry="12" fill="#1e5078" filter="url(#b6)"/>
<rect x="1458" y="855" width="211" height="118" filter="url(#nk)"/>
<ellipse cx="1490" cy="958" rx="34" ry="16" fill="#1d2c20" filter="url(#b2)"/>
<ellipse cx="1462" cy="930" rx="10" ry="40" fill="#10202a" filter="url(#b2)"/>
<ellipse cx="1628" cy="968" rx="22" ry="6" fill="#12241f" filter="url(#b2)"/>
<circle cx="1629" cy="851" r="4" fill="#d49030" filter="url(#b05)"/>
<path d="M1556 894C1548 886 1541 882 1541 875C1541 866 1549 860 1559 860C1569 860 1577 866 1577 875C1577 882 1565 888 1556 894z" fill="url(#bal2)"/>
<path d="M1638 940C1630 930 1612 917 1612 900C1612 887 1624 878 1638 878C1652 878 1664 887 1664 900C1664 917 1646 930 1638 940z" fill="url(#bal)"/>
<path d="M1638 940C1630 930 1612 917 1612 900C1612 887 1624 878 1638 878C1652 878 1664 887 1664 900C1664 917 1646 930 1638 940z" fill="url(#st)"/>
<path d="M1634 941h7v4h-7z" fill="#e07828"/>
<path d="M1583 967C1570 950 1549 935 1549 913C1549 897 1565 887 1583 887C1601 887 1617 897 1617 913C1617 935 1596 950 1583 967z" fill="url(#bal)"/>
<path d="M1583 967C1570 950 1549 935 1549 913C1549 897 1565 887 1583 887C1601 887 1617 897 1617 913C1617 935 1596 950 1583 967z" fill="url(#st)"/>
<path d="M1581 967h4v6h-4z" fill="#7a1a14"/>
<path d="M1573 887c5-4 14-4 19 0z" fill="#7a3040"/>
<rect x="1472" y="878" width="68" height="64" fill="#000"/>
<rect x="1474.500" y="889.500" width="63" height="30" class="dot"/><rect x="1474.500" y="919.500" width="63" height="15.500" class="dot"/>
<g class="w"><text x="1476" y="896" textLength="49" lengthAdjust="spacingAndGlyphs" style="font-weight:bold;font-size:8.500px">KLIKKEN OM</text><text x="1476" y="906" textLength="54" lengthAdjust="spacingAndGlyphs" style="font-weight:bold;font-size:8.500px">EEN TITEL TOE</text><text x="1476" y="917" textLength="43" lengthAdjust="spacingAndGlyphs" style="font-weight:bold;font-size:8.500px">TE VOEGEN</text></g>
<text x="1476" y="925" textLength="52" style="font-size:3.500px;fill:#e8386a">KLIKKEN OM EEN ONDERTITEL</text><text x="1476" y="929" textLength="27" style="font-size:3.500px;fill:#e8386a">TOE TE VOEGEN</text>
</g>

<!-- T6 flower -->
<g clip-path="url(#c6)">
<rect x="1458" y="993" width="211" height="91" fill="#efe7e8"/>
<path d="M1544 1018l46 36" stroke="#c8c4b0" stroke-width="5" filter="url(#b2)"/>
<ellipse cx="1590" cy="1017" rx="8" ry="6" fill="#b08884" filter="url(#b2)"/>
<circle cx="1560" cy="1000" r="5.500" fill="#7e5050" filter="url(#b05)"/><circle cx="1549" cy="1010" r="4.500" fill="#a07474" filter="url(#b05)"/><circle cx="1548" cy="995" r="3" fill="#9a6a6a" filter="url(#b05)"/>
<path d="M1587 1060l10-5 6-9 8 3 12-2 8 7-2 12 6 8-4 10h-48l-6-10z" fill="#fbfafa" filter="url(#b05)"/>
<path d="M1603 1055l4 10M1612 1052l-4 12M1596 1062l10 4M1618 1064l-10 1" stroke="#b09080" stroke-width=".7"/>
<circle cx="1607" cy="1066" r="3.500" fill="#8a5a3a" filter="url(#b05)"/><path d="M1600 1070l8 2 8-3-3 6h-10z" fill="#a87058" filter="url(#b05)"/>
<ellipse cx="1562" cy="1070" rx="8" ry="10" fill="#d8b0b4" filter="url(#b2)"/><circle cx="1565" cy="1072" r="2.500" fill="#a03a4a" filter="url(#b05)"/>
<rect x="1458" y="993" width="86" height="91" fill="#1e1e1e"/>
<rect x="1473.500" y="1008.500" width="64" height="64" class="dot"/><rect x="1473.500" y="1073.500" width="64" height="20" class="dot"/>
<text x="1476" y="1047" textLength="49" style="font-family:'Liberation Serif',serif;font-size:11px;fill:#c4c4c4">Klikken om</text><text x="1476" y="1058" textLength="57" style="font-family:'Liberation Serif',serif;font-size:11px;fill:#c4c4c4">een titel toe te</text><text x="1476" y="1070" textLength="29" style="font-family:'Liberation Serif',serif;font-size:11px;fill:#c4c4c4">voegen</text>
<text x="1476" y="1079" textLength="52" style="font-size:5px;fill:#b0a080">Klikken om een ondertitel</text>
</g>

<!-- horizontal scrollbar -->
<rect x="1435" y="1084" width="232" height="14" fill="#d9d9d9"/>
<rect x="1450.500" y="1084.500" width="172" height="14" fill="#fff" stroke="#ababab"/>
<rect x="1435.500" y="1084.500" width="15" height="14" fill="#fff" stroke="#ababab"/>
<rect x="1652.500" y="1084.500" width="14.500" height="14" fill="#fff" stroke="#ababab"/>
<path d="M1445 1088v7l-4-3.500z" fill="#555"/><path d="M1658 1088v7l4-3.500z" fill="#555"/>

<!-- status bar -->
<rect y="1115" width="1707" height="22" fill="#f3f3f3"/>
<path d="M0 1114.500h1707" stroke="#d5d5d5"/>
<rect x="1337" y="1115" width="40" height="22" fill="#c6c6c6"/>
<text x="8" y="1130" textLength="55" lengthAdjust="spacingAndGlyphs" style="font-size:12px">Dia 1 van 1</text><text x="83" y="1130" textLength="120" lengthAdjust="spacingAndGlyphs" style="font-size:12px">Nederlands (standaard)</text>
<text x="1278" y="1130" textLength="39" lengthAdjust="spacingAndGlyphs" style="font-size:12px">Notities</text><text x="1642" y="1130" textLength="21" lengthAdjust="spacingAndGlyphs" style="font-size:11.500px;fill:#555">85%</text>
<g class="si">
<path d="M1261 1126.500h14M1261 1129.500h14M1264 1123.500l4-3 4 3"/>
<path d="M1350.500 1120.500h13v12h-13zM1353 1122.500h8.500v6h-8.500zM1353 1130.500h8.500"/>
<path d="M1390.500 1120.500h6v5h-6zM1398.500 1120.500h6v5h-6zM1390.500 1128.500h6v5h-6zM1398.500 1128.500h6v5h-6z"/>
<path d="M1430.500 1120.500h13v13h-13zM1437 1120.500v13M1432.500 1123.500h3M1432.500 1126.500h3M1432.500 1129.500h3M1438.500 1123.500h3M1438.500 1126.500h3M1438.500 1129.500h3"/>
<path d="M1470.500 1120.500h12v9h-12zM1476.500 1129.500v4M1472.500 1133.500h8"/>
<path d="M1503 1126.500h7M1622 1126.500h7M1625.500 1123v7"/>
<path d="M1680 1122.500h6v8h-6zM1681 1120l2-2 2 2M1681 1133l2 2 2-2M1678 1124.500l-2.500 2 2.500 2M1688 1124.500l2.500 2-2.500 2"/>
</g>
<path d="M1517 1126.500h98" stroke="#aaa"/><path d="M1567.500 1124v5" stroke="#aaa"/>
<rect x="1556" y="1121" width="5" height="11" fill="#777"/>

<!-- window border -->
<path d="M.5 35V1137.500H1706.500V35" fill="none" stroke="#b7472a"/>
</svg>
</body></html>
